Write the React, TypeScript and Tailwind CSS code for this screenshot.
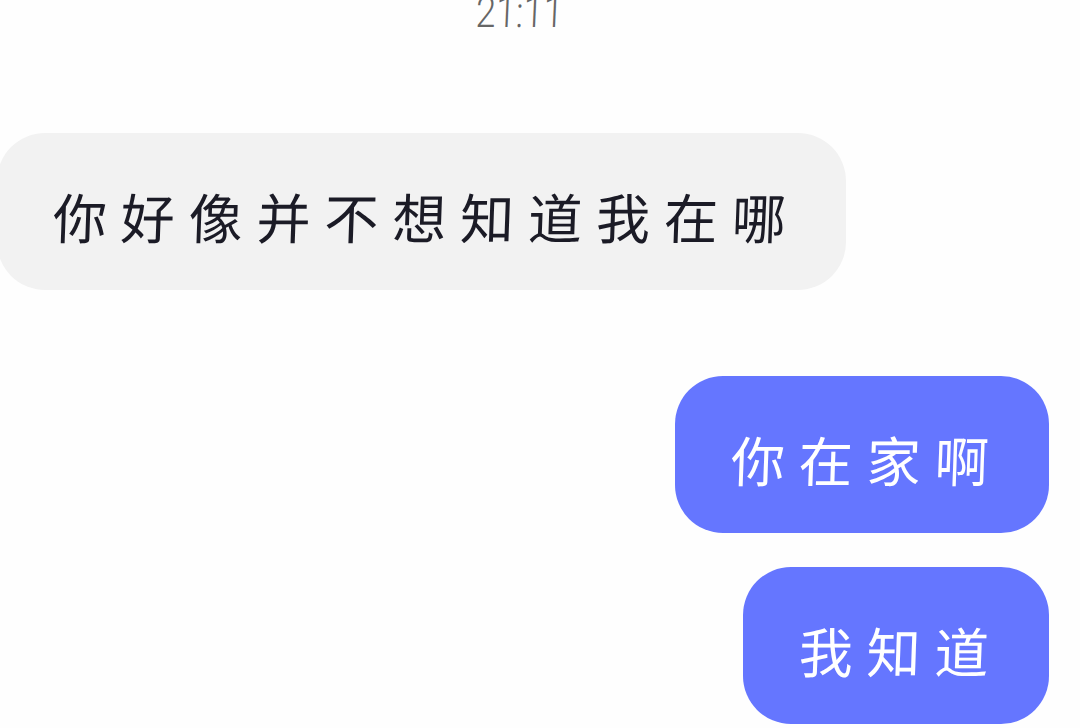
import clsx from "clsx";

type Message = {
  id: number;
  text: string;
  mine: boolean;
};

const messages: Message[] = [
  { id: 1, text: "你好像并不想知道我在哪", mine: false },
  { id: 2, text: "你在家啊", mine: true },
  { id: 3, text: "我知道", mine: true }
];

function Bubble({ message }: { message: Message }) {
  return (
    <div
      className={clsx(
        "flex h-[156.5px] shrink-0 items-center rounded-[48px] pt-[9px] pr-[46px] pl-[56px] whitespace-nowrap",
        message.mine
          ? "mr-[31px] self-end bg-[#6576ff] text-white"
          : "-ml-[3px] mb-[52px] self-start bg-[#f2f2f2] text-[#1b1b26]"
      )}
    >
      <span className="-skew-x-2 font-['Noto_Sans_CJK_SC',sans-serif] text-[54px] leading-none tracking-[13.9px]">
        {message.text}
      </span>
    </div>
  );
}

export default function App() {
  return (
    <main className="flex h-[728px] w-full flex-col overflow-hidden bg-[#fefefe]">
      <div className="flex h-[133px] shrink-0 justify-center pr-[42px]">
        <time className="-mt-[2px] h-9 origin-bottom -skew-x-3 scale-y-120 font-[Roboto,sans-serif] text-[36px] leading-9 font-light text-[#666]">
          21:11
        </time>
      </div>
      <div className="flex flex-col gap-[34.5px]">
        {messages.map((message) => (
          <Bubble key={message.id} message={message} />
        ))}
      </div>
    </main>
  );
}
